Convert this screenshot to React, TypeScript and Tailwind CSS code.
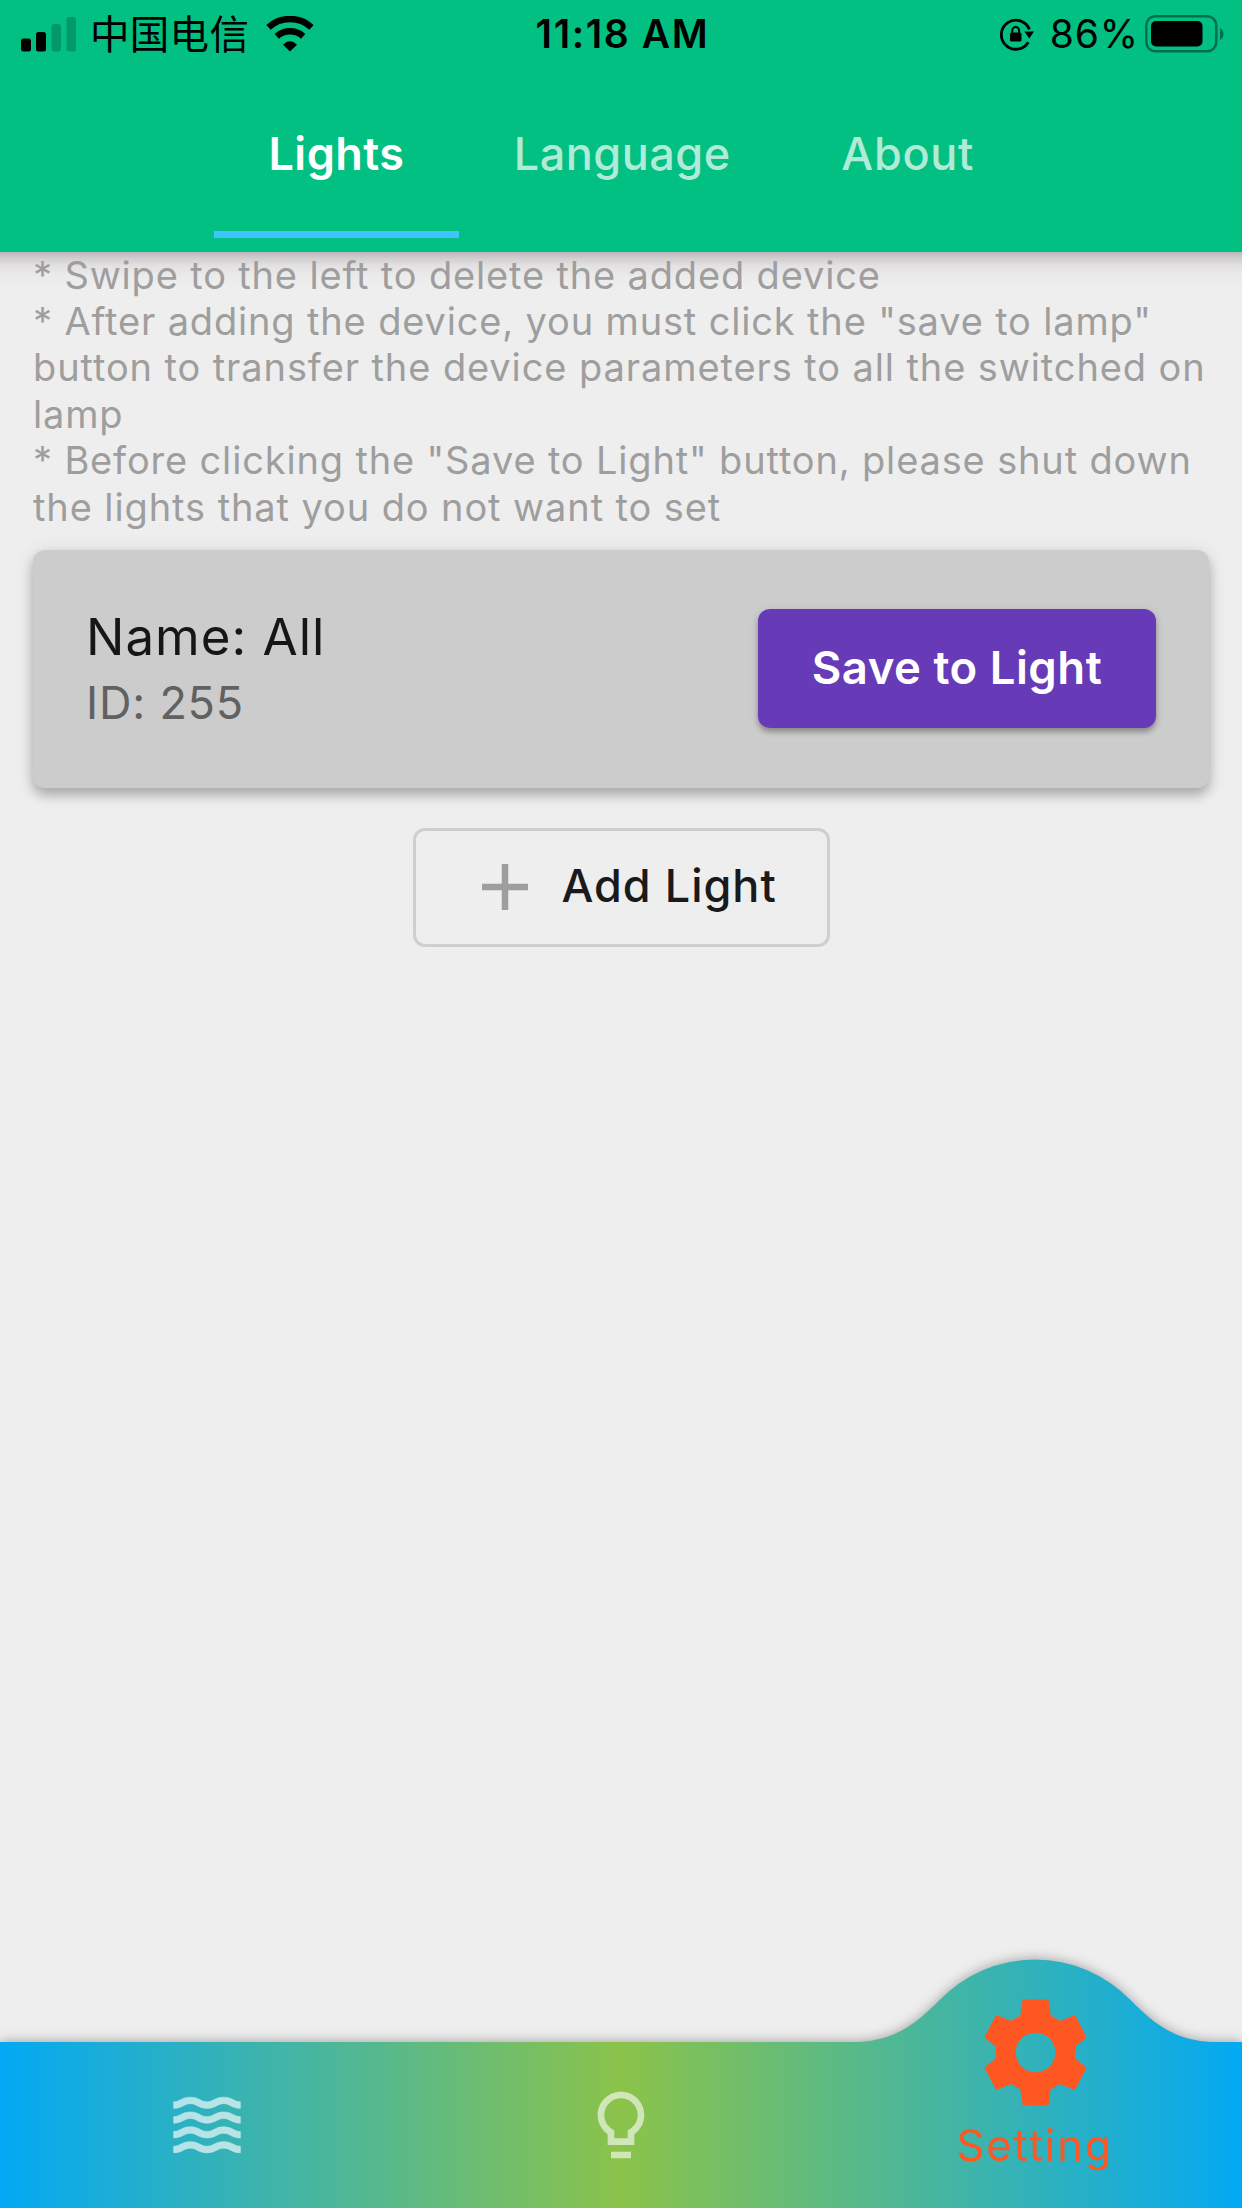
import type { ReactNode } from "react";

const WAVE =
  "c-1.35 0-2.2.42-2.95.8-.65.33-1.18.6-2.05.6-.9 0-1.4-.25-2.05-.6-.75-.38-1.57-.8-2.95-.8s-2.2.42-2.95.8c-.65.33-1.17.6-2.05.6v1.95c1.35 0 2.2-.42 2.95-.8.65-.33 1.17-.6 2.05-.6s1.4.25 2.05.6c.75.38 1.57.8 2.95.8s2.2-.42 2.95-.8c.65-.33 1.18-.6 2.05-.6.9 0 1.4.25 2.05.6.75.38 1.58.8 2.95.8v-1.95c-.9 0-1.4-.25-2.05-.6-.75-.38-1.6-.8-2.95-.8z";

function WavesIcon() {
  return (
    <svg viewBox="0 0 24 24" className="size-20" fill="currentColor" stroke="currentColor" strokeWidth="0.2">
      {[3.65, 8.1, 12.54, 16.99].map((y) => (
        <path key={y} d={`M17 ${y}${WAVE}`} />
      ))}
    </svg>
  );
}

function BulbIcon() {
  return (
    <svg viewBox="0 0 24 24" className="size-20" fill="currentColor">
      <path d="M9 22h6v-2H9zM12 2C8.14 2 5 5.14 5 9c0 2.38 1.19 4.47 3 5.74V18h8v-3.26c1.81-1.27 3-3.36 3-5.74 0-3.86-3.14-7-7-7zm2 11.7V16h-4v-2.3C8.48 12.63 7 11.53 7 9c0-2.76 2.24-5 5-5s5 2.24 5 5c0 2.49-1.51 3.65-3 4.7z" />
    </svg>
  );
}

function GearIcon() {
  return (
    <svg viewBox="0 0 24 24" className="size-[127px]" fill="currentColor">
      <path
        fillRule="evenodd"
        d="M19.44 12.99l-.01.02c.04-.33.08-.67.08-1.01 0-.34-.03-.66-.07-.99l.01.02 2.2-1.92-2.19-4.22-2.87 1.16.01.01c-.52-.4-1.09-.74-1.71-1h.01L14.44 2H9.57l-.44 3.07h.01c-.62.26-1.19.6-1.71 1l.01-.01-2.88-1.17-2.2 4.22 2.2 1.92.01-.02c-.04.33-.07.65-.07.99 0 .34.03.68.08 1.01l-.01-.02-2.2 1.91 2.2 4.2 2.88-1.15-.02-.04c.53.41 1.1.75 1.73 1.01h-.03L9.58 22h4.85l.44-3.07h-.01c.62-.26 1.2-.6 1.73-1.01l-.02.04 2.88 1.15 2.19-4.2zM12 15.75a3.75 3.75 0 1 1 0-7.5 3.75 3.75 0 0 1 0 7.5z"
      />
    </svg>
  );
}

function SignalIcon() {
  return (
    <svg viewBox="0 0 55 35" className="h-[35px] w-[55px]">
      <rect x="0" y="21.5" width="10" height="13" rx="2.5" />
      <rect x="15" y="15" width="10" height="19.5" rx="2.5" />
      <rect x="30.5" y="7" width="9.5" height="27.5" rx="2.5" opacity="0.2" />
      <rect x="45.5" y="0" width="9.5" height="34.5" rx="2.5" opacity="0.2" />
    </svg>
  );
}

function WifiIcon() {
  return (
    <svg viewBox="0 0 48 36" className="ml-[17px] h-9 w-12" fill="none" stroke="black" strokeWidth="6.5">
      <path d="M2.5 11.3A32 32 0 0 1 45.5 11.3" />
      <path d="M10.8 20.3A19.8 19.8 0 0 1 37.2 20.3" />
      <path d="M24 35.5L17 28.7Q24 22 31 28.7Z" fill="black" stroke="none" />
    </svg>
  );
}

function RotationLockIcon() {
  return (
    <svg viewBox="0 0 36 36" className="size-9" fill="none" stroke="black">
      <path d="M30.3 26.2A14.5 14.5 0 1 1 31.4 13.5" strokeWidth="2.8" />
      <path d="M26.5 15.5H36L31.2 22.5Z" fill="black" stroke="none" />
      <rect x="12" y="16.5" width="11.5" height="9" rx="1.5" fill="black" stroke="none" />
      <path d="M14.3 17V14.3a3.4 3.4 0 0 1 6.8 0V17" strokeWidth="2" />
    </svg>
  );
}

function BatteryIcon() {
  return (
    <svg viewBox="0 0 79 38" className="h-[38px] w-[79px]">
      <rect x="1.3" y="1.3" width="70" height="35" rx="9" fill="none" stroke="black" strokeOpacity="0.42" strokeWidth="2.5" />
      <rect x="6" y="6" width="51.5" height="25.5" rx="5" />
      <path d="M75 13q3.500 2 3.500 6t-3.500 6z" opacity="0.42" />
    </svg>
  );
}

function Tab({ className, children }: { className: string; children: ReactNode }) {
  return (
    <div
      className={`flex h-[172px] items-center justify-center border-b-[7px] pt-[10px] text-[45px] leading-none ${className}`}
    >
      {children}
    </div>
  );
}

export default function App() {
  return (
    <div
      className="flex h-[2208px] w-[1242px] flex-col overflow-hidden bg-[#eeeeee]"
      style={{ fontFamily: '"Inter", "Noto Sans CJK SC", sans-serif' }}
    >
      <header className="h-[251.5px] shrink-0 bg-[#02c082]">
        <div className="grid h-[66px] grid-cols-3 items-center text-black">
          <div className="flex items-center pl-[21px]">
            <SignalIcon />
            <span className="ml-[14px] pt-0.5 text-[39.5px] leading-[60px] tracking-[0.3px]">中国电信</span>
            <WifiIcon />
          </div>
          <div className="pl-[3px] text-center text-[39px] leading-[66px] font-semibold tracking-[1.6px]">11:18 AM</div>
          <div className="flex items-center justify-end pr-[18px]">
            <RotationLockIcon />
            <span className="ml-4 text-[39px] leading-[68px] tracking-[0.9px]">86%</span>
            <span className="ml-1.5 -mt-px">
              <BatteryIcon />
            </span>
          </div>
        </div>
        <nav className="flex justify-center">
          <Tab className="w-[245.5px] border-[#40c4ff] font-semibold tracking-[0.5px] text-white">Lights</Tab>
          <Tab className="w-[328px] border-transparent pr-[2px] font-[550] tracking-[0.5px] text-white/70">Language</Tab>
          <Tab className="w-[241px] border-transparent font-[550] tracking-[0.7px] text-white/70">About</Tab>
        </nav>
      </header>

      <main className="flex-1 bg-[linear-gradient(to_bottom,#bdb9ba_0px,#d3d0d1_7px,#e3e1e2_14px,#ebebeb_24px,#eeeeee_36px)] px-[33px]">
        <div className="w-[1190px] text-[38px] leading-[46.4px] tracking-[0.84px] text-[#9e9e9e]">
          <p>* Swipe to the left to delete the added device</p>
          <p>
            * After adding the device, you must click the "save to lamp"
            <br />
            <span className="tracking-[0.9px]">button to transfer the device parameters to all the switched on</span>
            <br />
            lamp
          </p>
          <p>
            * Before clicking the "Save to Light" button, please shut down
            <br />
            <span className="tracking-[0.9px]">the lights that you do not want to set</span>
          </p>
        </div>

        <section className="mt-[20px] flex h-[238px] items-center justify-between rounded-xl bg-[#cccccc] px-[53px] shadow-[0_7px_12px_rgba(0,0,0,0.24),0_3px_20px_rgba(0,0,0,0.1)]">
          <div>
            <h2 className="pt-[2px] text-[51px] leading-[67px] tracking-[1px] text-[#161616]">Name: All</h2>
            <p className="text-[45px] leading-[66px] tracking-[0.8px] text-[#616161]">ID: 255</p>
          </div>
          <button className="h-[119px] w-[398px] rounded-xl bg-[#673ab7] pb-[3px] text-[45.5px] leading-none font-[580] tracking-[0.5px] text-white shadow-[0_4px_5px_rgba(0,0,0,0.25),0_2px_10px_rgba(0,0,0,0.12)]">
            Save to Light
          </button>
        </section>

        <button className="mx-auto mt-[40px] flex h-[119px] w-[417px] items-center rounded-xl border-[3px] border-[#cfcfcf] pb-[3px] pl-[66px] text-[45px] leading-none font-[460] tracking-[1px] text-[#1a1a1a]">
          <svg viewBox="0 0 46 46" className="mt-[3px] mr-[34px] size-[46px]" stroke="#9e9e9e" strokeWidth="6.5">
            <path d="M23 0V46M0 23H46" />
          </svg>
          Add Light
        </button>
      </main>

      <footer className="h-[249px] shrink-0 drop-shadow-[0_-1px_6px_rgba(0,0,0,0.3)]">
        <div className="grid h-full grid-cols-3 bg-[linear-gradient(to_right,#03a9f4,#8bc34a,#03a9f4)] [clip-path:path('M0_83H853C892_83_914_67_939_41.500A133_133_0_0_1_1131_41.500C1156_67_1178_83_1217_83H1242V249H0Z')]">
          <div className="flex justify-center pt-[126px] text-white opacity-65">
            <WavesIcon />
          </div>
          <div className="flex justify-center pt-[126px] text-white opacity-60">
            <BulbIcon />
          </div>
          <div className="flex flex-col items-center pt-[30px] text-[#ff5722]">
            <GearIcon />
            <span className="mt-[3px] text-[43.5px] leading-[52px] tracking-[1.9px]">Setting</span>
          </div>
        </div>
      </footer>
    </div>
  );
}
